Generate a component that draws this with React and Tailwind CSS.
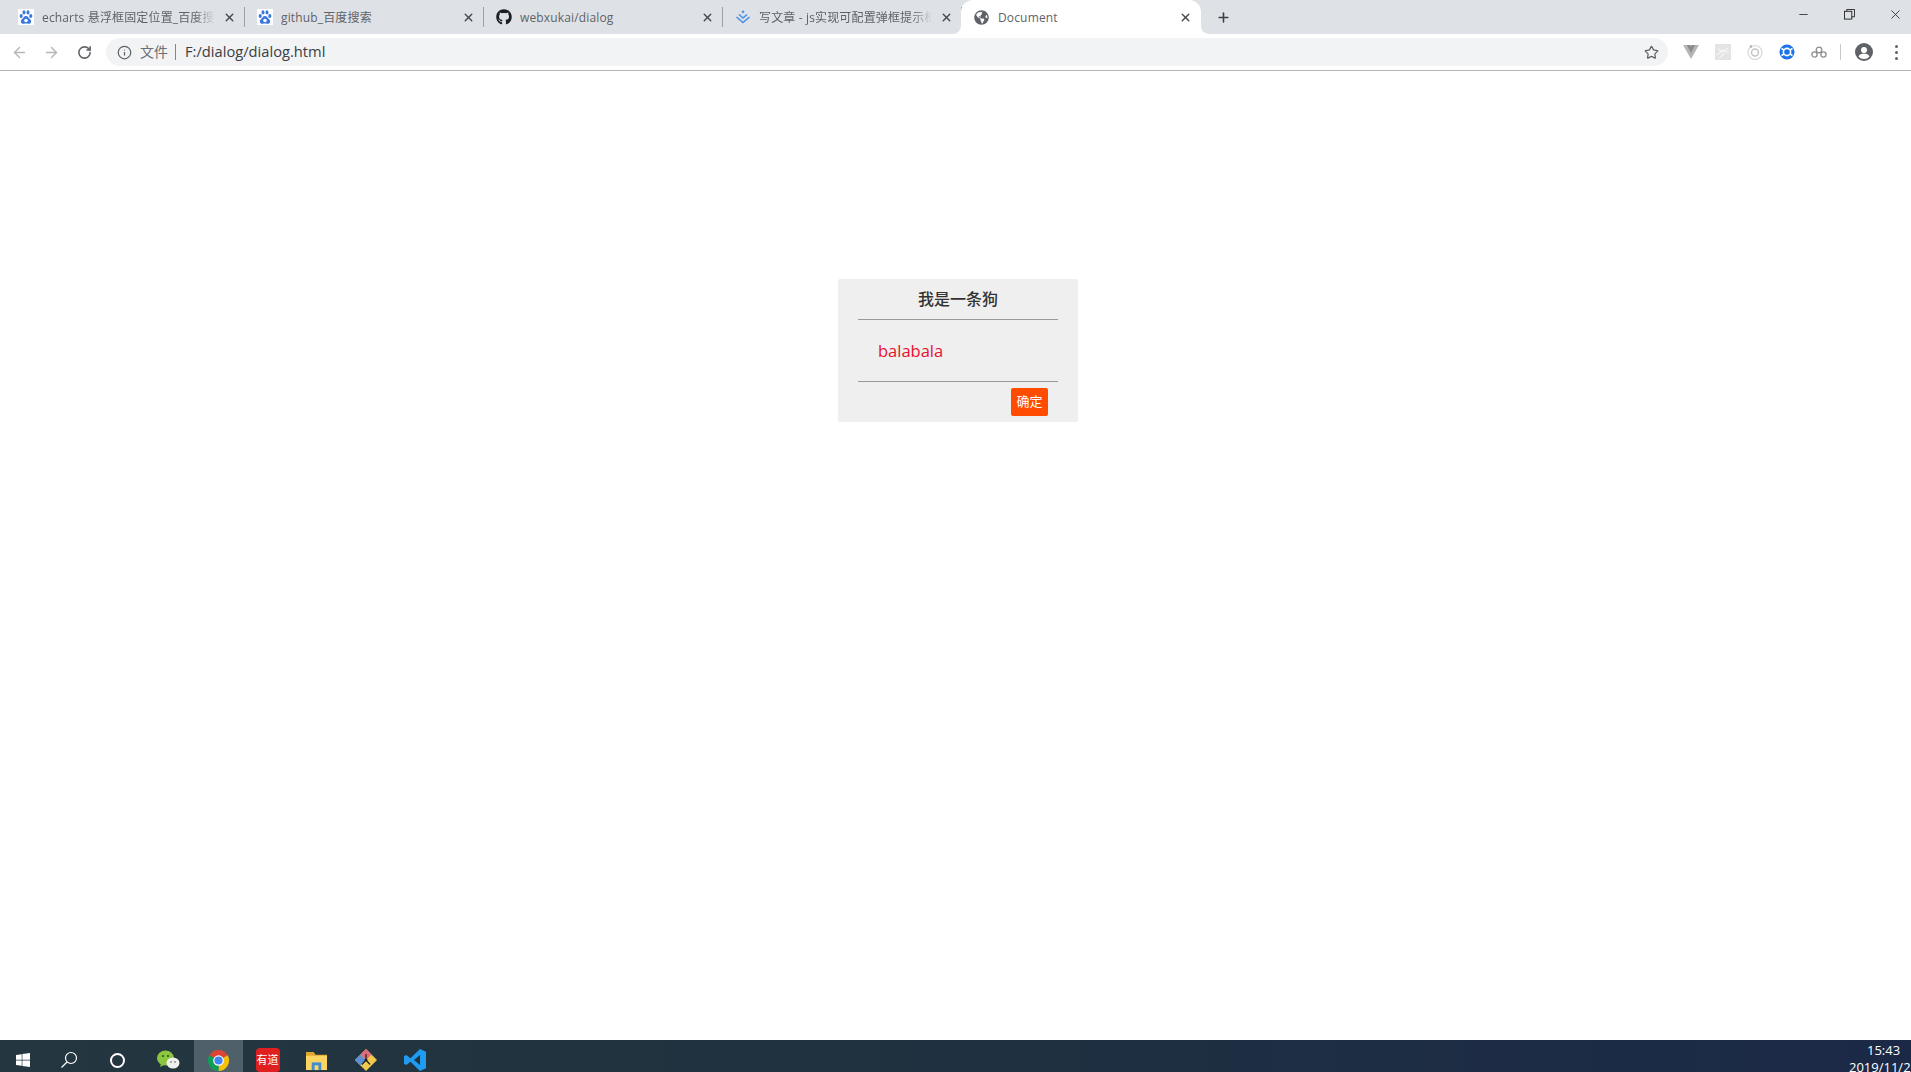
import React from "react";
import { ArrowLeft, ArrowRight, RotateCw, Info, Star, Plus, X, Minus } from "lucide-react";
import { FaGithub, FaGlobeAmericas, FaWindows } from "react-icons/fa";

const BaiduIcon = () => (
  <svg viewBox="0 0 16 16" className="w-4 h-4 bg-white">
    <g fill="#3a78e0">
      <ellipse cx="3.2" cy="7" rx="1.6" ry="2" />
      <ellipse cx="6" cy="3.4" rx="1.5" ry="2.1" />
      <ellipse cx="10" cy="3.4" rx="1.5" ry="2.1" />
      <ellipse cx="12.8" cy="7" rx="1.6" ry="2" />
      <path d="M8 7c-2 0-2.4 1.8-3.6 2.8C3 11 2.6 12 3 13.2c.4 1.4 1.8 1.8 3 1.5 1.3-.3 2.7-.3 4 0 1.200.3 2.600-.1 3-1.500.4-1.200 0-2.200-1.400-3.400C10.400 8.800 10 7 8 7z" />
    </g>
    <circle cx="8" cy="11.500" r="1.800" fill="#fff" />
  </svg>
);

const JuejinIcon = () => (
  <svg viewBox="0 0 16 16" className="w-4 h-4" fill="none" stroke="#4a90e2" strokeWidth="1.600">
    <path d="M8 1.200 9.600 2.800 8 4.400 6.400 2.800z" fill="#4a90e2" stroke="none" />
    <path d="M4 5.500 8 9l4-3.500" />
    <path d="M1.500 8 8 13.500 14.500 8" />
  </svg>
);

const tabs = [
  { title: "echarts 悬浮框固定位置_百度搜索", icon: <BaiduIcon />, fade: true },
  { title: "github_百度搜索", icon: <BaiduIcon /> },
  { title: "webxukai/dialog", icon: <FaGithub className="w-4 h-4 text-[#1b1f23]" /> },
  { title: "写文章 - js实现可配置弹框提示框", icon: <JuejinIcon />, fade: true },
];

const Tab = ({ title, icon, fade }) => (
  <div className="relative w-[239px] h-full flex items-center pl-3 pr-[9px] shrink-0">
    <span className="w-4 shrink-0 flex justify-center">{icon}</span>
    <span
      className={`ml-2 pt-[2px] flex-1 overflow-hidden whitespace-nowrap text-xs tracking-[0.15px] text-[#5f6368] ${
        fade ? "[mask-image:linear-gradient(to_right,black_88%,transparent)]" : ""
      }`}
    >
      {title}
    </span>
    <X className="ml-2 w-[13px] h-[13px] text-[#45494d] shrink-0" strokeWidth={2.500} />
    <span className="absolute right-0 top-[7px] h-5 w-px bg-[#9aa0a6]" />
  </div>
);

const ActiveTab = () => (
  <div className="relative w-[240px] h-[34px] -ml-px bg-white rounded-t-xl flex items-center pl-[13px] pr-[9px] shrink-0">
    <FaGlobeAmericas className="w-[15px] h-[15px] text-[#5f6368] shrink-0" />
    <span className="ml-[9px] pt-[2px] flex-1 text-xs tracking-[0.15px] text-[#5f6368] whitespace-nowrap">Document</span>
    <X className="w-[13px] h-[13px] text-[#45494d]" strokeWidth={2.500} />
    <span className="absolute bottom-0 -left-2 w-2 h-2 bg-white">
      <span className="block w-full h-full bg-[#dee1e6] rounded-br-lg" />
    </span>
    <span className="absolute bottom-0 -right-2 w-2 h-2 bg-white">
      <span className="block w-full h-full bg-[#dee1e6] rounded-bl-lg" />
    </span>
  </div>
);

const RestoreIcon = () => (
  <svg viewBox="0 0 12 12" className="w-[11px] h-[11px]" fill="none" stroke="#222" strokeWidth="1">
    <rect x="0.500" y="2.500" width="8" height="8.500" />
    <path d="M3 2.500V.5h8.500v8H8.500" />
  </svg>
);

const TabStrip = () => (
  <div className="h-[34px] bg-[#dee1e6] flex items-stretch pl-[6px] shrink-0">
    {tabs.map((t) => (
      <Tab key={t.title} {...t} />
    ))}
    <ActiveTab />
    <div className="w-[44px] flex items-center justify-center shrink-0">
      <Plus className="w-[15px] h-[15px] text-[#3c4043]" strokeWidth={2.500} />
    </div>
    <div className="ml-auto flex h-[28px] -mr-[7px]">
      <div className="w-[46px] flex items-center justify-center">
        <Minus className="w-[13px] h-[13px] text-[#222]" strokeWidth={1.500} />
      </div>
      <div className="w-[46px] flex items-center justify-center">
        <RestoreIcon />
      </div>
      <div className="w-[46px] flex items-center justify-center">
        <X className="w-[15px] h-[15px] text-[#222]" strokeWidth={1.300} />
      </div>
    </div>
  </div>
);

const Extensions = () => (
  <>
    <div className="w-8 flex justify-center">
      <svg viewBox="0 0 16 16" className="w-4 h-4">
        <path d="M0 1h16L8 15z" fill="#b5b5b5" />
        <path d="M4 1h3l1 2 1-2h3L8 9z" fill="#8a8a8a" />
      </svg>
    </div>
    <div className="w-8 flex justify-center">
      <svg viewBox="0 0 16 16" className="w-4 h-4">
        <rect width="16" height="16" fill="#e4e4e4" />
        <path d="M2 11 8 6l6 3M3 5l5 3 5-4M4 14l6-5" fill="none" stroke="#f5f5f5" strokeWidth="1.200" />
      </svg>
    </div>
    <div className="w-8 flex justify-center">
      <svg viewBox="0 0 16 16" className="w-4 h-4" fill="none">
        <circle cx="8" cy="8.500" r="7" stroke="#d6d6d6" strokeWidth="1.200" />
        <circle cx="8" cy="8.500" r="3.500" stroke="#c4c4c4" strokeWidth="1.400" />
        <circle cx="4" cy="2.500" r="1.200" fill="#aaa" />
      </svg>
    </div>
    <div className="w-8 flex justify-center">
      <svg viewBox="0 0 16 16" className="w-4 h-4">
        <circle cx="8" cy="8" r="7.500" fill="#1a73e8" />
        <circle cx="8" cy="8" r="3.600" fill="none" stroke="#fff" strokeWidth="1.600" />
        <path d="M2.500 4.500 5 6M13.500 4.500 11 6M2.500 11.500 5 10M13.500 11.500 11 10" stroke="#fff" strokeWidth="1.600" />
      </svg>
    </div>
    <div className="w-8 flex justify-center">
      <svg viewBox="0 0 16 16" className="w-4 h-4" fill="none" stroke="#8d8d8d" strokeWidth="1.300">
        <circle cx="3.500" cy="10.500" r="2.600" />
        <circle cx="8" cy="6" r="2.800" />
        <circle cx="12.500" cy="10.500" r="2.600" />
      </svg>
    </div>
  </>
);

const Toolbar = () => (
  <div className="h-[37px] bg-white border-b border-[#b4b4b4] flex items-center shrink-0">
    <div className="w-[39px] flex justify-center shrink-0">
      <ArrowLeft className="w-[17px] h-[17px] text-[#b4b7ba]" strokeWidth={2} />
    </div>
    <div className="w-[25px] flex justify-center shrink-0">
      <ArrowRight className="w-[17px] h-[17px] text-[#b4b7ba]" strokeWidth={2} />
    </div>
    <div className="w-[40px] flex justify-center shrink-0">
      <RotateCw className="w-[15px] h-[15px] text-[#5f6368]" strokeWidth={2.500} />
    </div>
    <div className="ml-[2px] w-[1562px] h-[28px] rounded-full bg-[#f1f3f4] flex items-center pl-[11px] pr-[9px] shrink-0">
      <Info className="w-[15px] h-[15px] text-[#5f6368]" strokeWidth={2} />
      <span className="ml-[8px] text-sm text-[#6b6f73]">文件</span>
      <span className="ml-[7px] w-px h-4 bg-[#80868b]" />
      <span className="ml-[9px] pb-px text-[14.7px] text-[#3c4043]">F:/dialog/dialog.html</span>
      <Star className="ml-auto w-[15px] h-[15px] text-[#5f6368]" strokeWidth={2} />
    </div>
    <div className="ml-[7px] flex items-center shrink-0">
      <Extensions />
    </div>
    <span className="ml-[5px] w-px h-4 bg-[#c8c8c8] shrink-0" />
    <div className="ml-[13px] w-5 flex justify-center shrink-0">
      <svg viewBox="0 0 18 18" className="w-[18px] h-[18px]">
        <circle cx="9" cy="9" r="9" fill="#5f6368" />
        <circle cx="9" cy="7" r="3" fill="#fff" />
        <path d="M3.500 13.500c1-2.200 3.200-3 5.500-3s4.500.8 5.500 3A7.200 7.200 0 0 1 9 16a7.200 7.200 0 0 1-5.500-2.500z" fill="#fff" />
      </svg>
    </div>
    <div className="ml-[20px] w-[4px] flex flex-col gap-[3px] shrink-0 items-center">
      <span className="w-[3px] h-[3px] rounded-full bg-[#5f6368]" />
      <span className="w-[3px] h-[3px] rounded-full bg-[#5f6368]" />
      <span className="w-[3px] h-[3px] rounded-full bg-[#5f6368]" />
    </div>
  </div>
);

const Dialog = () => (
  <div className="ml-[838px] mt-[208px] w-[240px] h-[143px] bg-[#efefef] rounded-[2px] px-5 flex flex-col">
    <div className="h-[41px] flex items-center justify-center border-b border-[#999] text-base text-[#333] font-medium">
      我是一条狗
    </div>
    <div className="h-[62px] flex items-center pl-5 pt-[2px] border-b border-[#999] text-[16.5px] text-[#e8112d]">balabala</div>
    <div className="flex justify-end pt-[6px] pr-[10px]">
      <button className="w-[37px] h-[28px] rounded-[2px] bg-[#ff4c00] text-[13px] text-white">确定</button>
    </div>
  </div>
);

const TaskIcon = ({ active, children }) => (
  <div className={`w-[49px] h-10 flex items-center justify-center shrink-0 ${active ? "bg-[#50606a]" : ""}`}>
    {children}
  </div>
);

const Taskbar = () => (
  <div className="h-[32px] overflow-hidden bg-[linear-gradient(to_right,#24363f,#20323f_40%,#1b2947)] flex shrink-0">
    <div className="w-[45px] h-10 flex items-center justify-center shrink-0">
      <FaWindows className="w-4 h-4 text-white" />
    </div>
    <div className="w-[48px] h-10 flex items-center justify-center shrink-0">
      <svg viewBox="0 0 18 18" className="w-[18px] h-[18px]" fill="none" stroke="#fff" strokeWidth="1.200">
        <circle cx="11" cy="7" r="5.500" />
        <path d="M7 11 1.500 16.500" />
      </svg>
    </div>
    <div className="w-[48px] h-10 flex items-center justify-center shrink-0">
      <span className="w-[15px] h-[15px] rounded-full border-2 border-white" />
    </div>
    <div className="w-[53px] h-10 flex items-center justify-center shrink-0">
      <svg viewBox="0 0 24 20" className="w-6 h-5">
        <ellipse cx="9.500" cy="8" rx="8.500" ry="7.500" fill="#8cc63f" />
        <path d="M5 13.500 4 17l4-2z" fill="#8cc63f" />
        <circle cx="7" cy="6" r="1.100" fill="#2c5a1e" />
        <circle cx="12" cy="6" r="1.100" fill="#2c5a1e" />
        <ellipse cx="17" cy="13" rx="6.500" ry="5.500" fill="#eef0ee" />
        <circle cx="15" cy="12" r=".9" fill="#888" />
        <circle cx="19" cy="12" r=".9" fill="#888" />
      </svg>
    </div>
    <TaskIcon active>
      <svg viewBox="0 0 24 24" className="w-[23px] h-[23px]">
        <path d="M12 12 2.470 6.500A11 11 0 0 1 21.530 6.500Z" fill="#db4437" />
        <path d="M12 12 21.530 6.500A11 11 0 0 1 12 23Z" fill="#f4c20d" />
        <path d="M12 12 12 23A11 11 0 0 1 2.470 6.500Z" fill="#0f9d58" />
        <circle cx="12" cy="12" r="5.500" fill="#fff" />
        <circle cx="12" cy="12" r="4.300" fill="#4285f4" />
      </svg>
    </TaskIcon>
    <TaskIcon>
      <span className="w-6 h-6 rounded bg-[#e0201f] text-white text-[11px] flex items-center justify-center whitespace-nowrap">
        有道
      </span>
    </TaskIcon>
    <TaskIcon>
      <svg viewBox="0 0 24 22" className="w-[23px] h-[21px]">
        <path d="M1 2h8l2 3h12v4H1z" fill="#e0a82e" />
        <rect x="1" y="6" width="22" height="15" fill="#fcd462" />
        <rect x="7" y="13" width="10" height="8" fill="#3d8fd1" />
        <rect x="10" y="16" width="4" height="5" fill="#fcd462" />
      </svg>
    </TaskIcon>
    <TaskIcon>
      <svg viewBox="0 0 24 24" className="w-6 h-6">
        <path d="M12 1 23 12 12 23 1 12z" fill="#f2c94c" />
        <path d="M1 12 6.500 6.500 12 12 6.500 17.500z" fill="#5b8fd6" />
        <path d="M6.500 6.500 12 1 17.500 6.500 12 12z" fill="#e06a78" />
        <path d="M12 12 8 16.500M12 12l4 4.500M12 12V6" stroke="#222" strokeWidth="1.200" fill="none" />
        <circle cx="12" cy="12" r="1.500" fill="#222" />
      </svg>
    </TaskIcon>
    <TaskIcon>
      <svg viewBox="0 0 24 24" className="w-6 h-6">
        <path
          fillRule="evenodd"
          d="M17 1 23 3.800V20.200L17 23 7.500 13.800 3.300 17 1 15.800V8.200L3.300 7 7.500 10.200ZM17 7 11 12l6 5Z"
          fill="#1f9cf0"
        />
      </svg>
    </TaskIcon>
    {/* date runs off the right edge in the reference too */}
    <div className="ml-auto w-[62px] shrink-0 pt-[2px] text-[13px] leading-[17px] text-white whitespace-nowrap">
      <div className="pl-[18px]">15:43</div>
      <div>2019/11/25</div>
    </div>
  </div>
);

export default function App() {
  return (
    <div className="w-[1911px] h-[1072px] overflow-hidden bg-white flex flex-col font-['Open_Sans','Noto_Sans_CJK_SC',sans-serif]">
      <TabStrip />
      <Toolbar />
      <main className="flex-1">
        <Dialog />
      </main>
      <Taskbar />
    </div>
  );
}
